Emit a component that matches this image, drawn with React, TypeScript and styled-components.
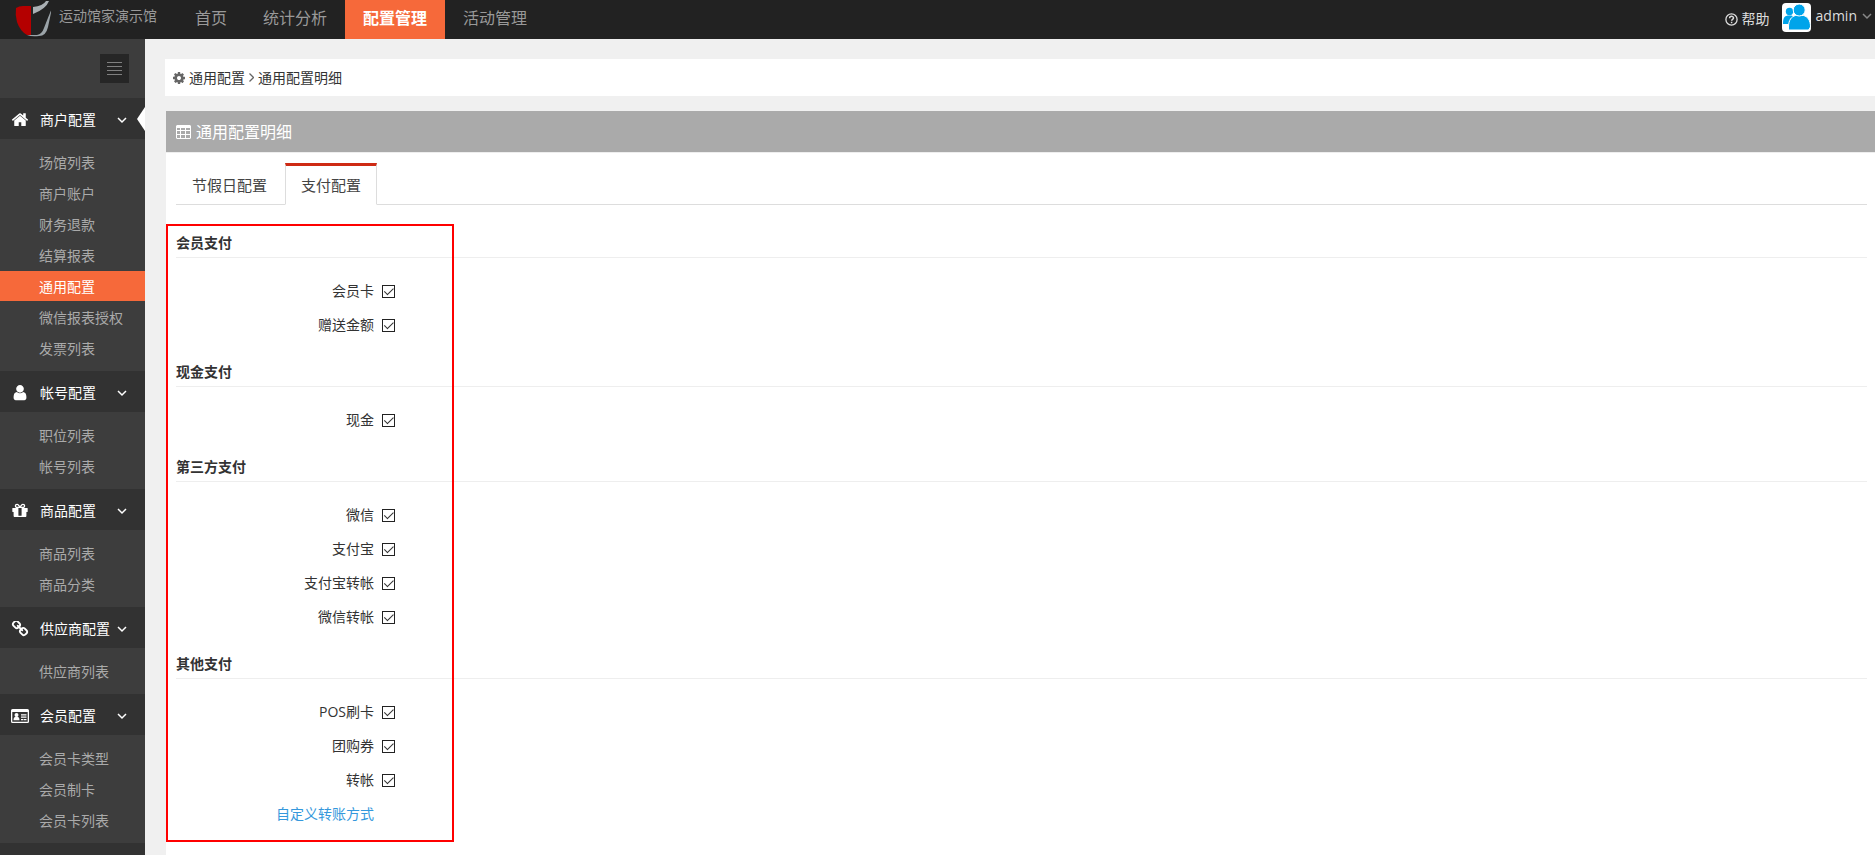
import React from "react";
import styled, { createGlobalStyle, css } from "styled-components";

const GlobalStyle = createGlobalStyle`
  *, *::before, *::after { box-sizing: border-box; }
  body {
    margin: 0;
    background: #f0f0f0;
    color: #333;
    font: 14px/20px "Open Sans", "Noto Sans CJK SC", sans-serif;
  }
  a { text-decoration: none; }
  ul { list-style: none; margin: 0; padding: 0; }
`;

const Shell = styled.div`
  display: flex;
  flex-direction: column;
  height: 100vh;
`;

/* ---------- top bar ---------- */

const TopBar = styled.header`
  display: flex;
  flex: none;
  height: 39px;
  background: #222;
`;

const Brand = styled.a`
  display: flex;
  width: 177px;
  padding-left: 15px;
  gap: 8px;
  color: #999;
  line-height: 32px;
  white-space: nowrap;
`;

const TopNav = styled.nav`
  display: flex;
`;

const TopLink = styled.a<{ $active?: boolean }>`
  padding: 0 18px;
  font-size: 16px;
  line-height: 36px;
  color: #999;
  ${(p) =>
    p.$active &&
    css`
      background: #f6693a;
      color: #fff;
      font-weight: 700;
    `}
`;

const UserArea = styled.div`
  display: flex;
  margin-left: auto;
  padding: 3px 3px 0 0;
`;

const HelpLink = styled.a`
  display: flex;
  align-items: center;
  gap: 4px;
  height: 32px;
  margin-right: 12px;
  color: #ddd;
`;

const UserButton = styled.button`
  display: flex;
  align-items: flex-start;
  height: 30px;
  padding: 0;
  border: 0;
  background: none;
  color: #ddd;
  font: inherit;
  line-height: 26px;
  cursor: pointer;

  span { margin: 0 5px; }
  svg:last-child { margin-top: 8px; }
`;

/* ---------- side bar ---------- */

const Columns = styled.div`
  display: flex;
  flex: 1;
  min-height: 0;
`;

const Sidebar = styled.aside`
  display: flex;
  flex-direction: column;
  flex: none;
  width: 145px;
  overflow-y: auto;
  scrollbar-width: none;
  background: #3d3d3d;
`;

const Toggle = styled.button`
  display: flex;
  flex: none;
  flex-direction: column;
  justify-content: center;
  align-self: flex-end;
  gap: 3px;
  width: 29px;
  height: 29px;
  margin: 15px 16px 15px 0;
  padding: 0 7px;
  border: 0;
  background: #262626;
  cursor: pointer;

  i { height: 1px; background: #808080; }
`;

const GroupHeader = styled.button`
  position: relative;
  display: flex;
  align-items: center;
  width: 100%;
  height: 41px;
  padding: 2px 18px 0 10px;
  border: 0;
  background: #323232;
  color: #fff;
  font: inherit;
  text-align: left;
  cursor: pointer;

  span { flex: 1; white-space: nowrap; }
`;

const GroupIcon = styled.svg`
  width: 20px;
  height: 16px;
  margin-right: 10px;
  fill: #fff;
`;

const Pointer = styled.svg`
  position: absolute;
  top: 9px;
  right: 0;
`;

const ItemList = styled.ul`
  padding: 8px 0 7px;
`;

const Item = styled.a<{ $active?: boolean }>`
  display: block;
  height: 30px;
  margin-bottom: 1px;
  padding-left: 39px;
  line-height: 32px;
  white-space: nowrap;
  color: ${(p) => (p.$active ? "#fff" : "#aaa")};
  background: ${(p) => (p.$active ? "#f6693a" : "transparent")};
`;

const SidebarTail = styled.div`
  flex: 1;
  background: #323232;
`;

/* ---------- main column ---------- */

const Main = styled.main`
  flex: 1;
  display: flex;
  flex-direction: column;
  min-width: 0;
  overflow-y: auto;
  padding: 20px 0 0 20px;
`;

const Crumbs = styled.nav`
  display: flex;
  flex: none;
  align-items: center;
  height: 37px;
  padding-left: 8px;
  background: #fff;
  gap: 4px;

  a { color: #333; }
`;

const Panel = styled.section`
  position: relative;
  flex: 1 0 auto;
  margin: 15px 0 0 1px;
  padding-bottom: 9px;
  background: #fff;
`;

const PanelTitle = styled.h1`
  display: flex;
  align-items: center;
  gap: 5px;
  height: 42px;
  margin: 0;
  padding: 0 10px;
  border-bottom: 1px solid #eee;
  background: #aaa;
  color: #fff;
  font-size: 16px;
  font-weight: 400;
`;

const Tabs = styled.div`
  display: flex;
  gap: 2px;
  margin: 10px 8px 23px 10px;
  border-bottom: 1px solid #ddd;
`;

const Tab = styled.button<{ $active?: boolean }>`
  height: 42px;
  margin-bottom: -1px;
  padding: 0 15px;
  border: 1px solid transparent;
  border-top: 3px solid transparent;
  background: none;
  color: #444;
  font: inherit;
  font-size: 15px;
  cursor: pointer;
  ${(p) =>
    p.$active &&
    css`
      border-color: #ce2a14 #ddd transparent;
      background: #fff;
    `}
`;

const Section = styled.fieldset`
  min-width: 0;
  margin: 0 8px 15px 10px;
  padding: 0;
  border: 0;
`;

const SectionTitle = styled.legend`
  display: block;
  width: 100%;
  height: 30px;
  margin-bottom: 16px;
  padding: 0;
  border-bottom: 1px solid #eee;
  font-weight: 700;
  line-height: 29px;
`;

const Row = styled.div`
  display: flex;
  align-items: center;
  gap: 8px;
  height: 34px;

  label, a { width: 198px; text-align: right; }
  a { color: #3598dc; }
`;

const Check = styled.input`
  appearance: none;
  width: 13px;
  height: 13px;
  margin: 0;
  border: 1px solid #222;
  background: #fff;

  &:checked::before {
    content: "";
    display: block;
    width: 9px;
    height: 5px;
    margin: 2px 1px;
    border: solid #333;
    border-width: 0 0 1px 1px;
    transform: rotate(-45deg);
    transform-origin: 50% 40%;
  }
`;

const Highlight = styled.div`
  position: absolute;
  top: 113px;
  bottom: 13px;
  left: 0;
  width: 288px;
  border: 2px solid #f00;
  pointer-events: none;
`;

/* ---------- drawings ---------- */

const icons: Record<string, React.ReactNode> = {
  home: (
    <path d="M1472 992v480q0 26-19 45t-45 19h-384v-384h-256v384h-384q-26 0-45-19t-19-45v-480q0-1 .5-3t.5-3l575-474 575 474q1 2 1 6zm223-69l-62 74q-8 9-21 11h-3q-13 0-21-7l-692-577-692 577q-12 8-24 7-13-2-21-11l-62-74q-8-10-7-23.5t11-21.5l719-599q32-26 76-26t76 26l244 204v-195q0-14 9-23t23-9h192q14 0 23 9t9 23v408l219 182q10 8 11 21.5t-7 23.5z" />
  ),
  user: (
    <path d="M1536 1399q0 109-62.5 187t-150.5 78h-854q-88 0-150.5-78t-62.5-187q0-85 8.5-160.5t31.5-152 58.5-131 94-89 134.5-34.5q131 128 313 128t313-128q76 0 134.5 34.5t94 89 58.5 131 31.5 152 8.5 160.5zm-256-887q0 159-112.5 271.5t-271.5 112.5-271.5-112.5-112.5-271.5 112.5-271.5 271.5-112.5 271.5 112.5 112.5 271.5z" />
  ),
  gift: (
    <path d="M1056 1356v-716h-320v716q0 25 18 38.5t46 13.5h192q28 0 46-13.5t18-38.5zm-456-844h195l-126-161q-26-31-69-31-40 0-68 28t-28 68 28 68 68 28zm688-96q0-40-28-68t-68-28q-43 0-69 31l-125 161h194q40 0 68-28t28-68zm376 256v320q0 14-9 23t-23 9h-96v416q0 40-28 68t-68 28h-1088q-40 0-68-28t-28-68v-416h-96q-14 0-23-9t-9-23v-320q0-14 9-23t23-9h440q-93 0-158.5-65.5t-65.5-158.5 65.5-158.5 158.5-65.5q107 0 168 77l128 165 128-165q61-77 168-77 93 0 158.5 65.5t65.5 158.5-65.5 158.5-158.5 65.5h440q14 0 23 9t9 23z" />
  ),
  chain: (
    <path d="M1520 1216q0-40-28-68l-208-208q-28-28-68-28-42 0-72 32 3 3 19 18.5t21.5 21.5 15 19 13 25.5 3.5 27.5q0 40-28 68t-68 28q-15 0-27.5-3.5t-25.5-13-19-15-21.5-21.5-18.5-19q-33 31-33 73 0 40 28 68l206 207q27 27 68 27 40 0 68-26l147-146q28-28 28-67zm-703-705q0-40-28-68l-206-207q-28-28-68-28-39 0-68 27l-147 146q-28 28-28 67 0 40 28 68l208 208q27 27 68 27 42 0 72-31-3-3-19-18.5t-21.5-21.5-15-19-13-25.5-3.5-27.5q0-40 28-68t68-28q15 0 27.5 3.5t25.5 13 19 15 21.5 21.5 18.5 19q33-31 33-73zm895 705q0 120-85 203l-147 146q-83 83-203 83-121 0-204-85l-206-207q-83-83-83-203 0-123 88-209l-88-88q-86 88-208 88-120 0-204-84l-208-208q-84-84-84-204t85-203l147-146q83-83 203-83 121 0 204 85l206 207q83 83 83 203 0 123-88 209l88 88q86-88 208-88 120 0 204 84l208 208q84 84 84 204z" />
  ),
};

const CardIcon = () => (
  <GroupIcon viewBox="0 0 20 16" aria-hidden="true">
    <path
      fillRule="evenodd"
      d="M2.500 1h15a1.500 1.500 0 0 1 1.500 1.500v11a1.500 1.500 0 0 1-1.500 1.500h-15a1.500 1.500 0 0 1-1.500-1.500v-11A1.500 1.500 0 0 1 2.500 1zM2.300 4v9.700h15.400V4z"
    />
    <circle cx="6.500" cy="7" r="2" />
    <path d="M3.500 12.200c0-2.400 1-3.600 3-3.600s3 1.200 3 3.600zM11 6.300h5.500v1.200H11zM11 8.600h5.500v1.200H11zM11 11h2.500v1.200H11zM14 11h2.500v1.200H14z" />
  </GroupIcon>
);

const Chevron = ({ color = "#fff" }: { color?: string }) => (
  <svg width="10" height="10" viewBox="0 0 10 10" fill="none" aria-hidden="true">
    <path d="M1 3l4 4 4-4" stroke={color} strokeWidth="1.500" />
  </svg>
);

const Logo = () => (
  <svg width="36" height="38" viewBox="0 0 36 38" aria-hidden="true">
    <path d="M1 8Q4 6 8 6h8v29h-4Q5 31 2 22Q0 15 1 8z" fill="#b40000" />
    <path d="M18 7Q28 6 31 1h3Q31 9 18 14z" fill="#aab0b4" />
    <path d="M37 8Q32 20 29 28Q27 34 22 35l-10 0Q17 37 24 36Q31 36 33 27z" fill="#9ba3a8" />
  </svg>
);

const Avatar = () => (
  <svg width="29" height="29" viewBox="0 0 29 29" aria-hidden="true">
    <rect width="29" height="29" rx="4" fill="#fff" />
    <g fill="#00a4ea">
      <circle cx="7.500" cy="8.500" r="3.700" />
      <path d="M1 21c0-6 1-8.500 6.500-8.500S13 15 13 21z" />
    </g>
    <g fill="#00a4ea" stroke="#fff">
      <path d="M6.500 27v-3c0-7 3-10.500 7-11.500h8c4 1 7 4.500 7 11.500l-2 3z" />
      <circle cx="17.200" cy="7" r="6" />
    </g>
  </svg>
);

const HelpIcon = () => (
  <svg width="13" height="13" viewBox="0 0 13 13" fill="none" stroke="#ddd" aria-hidden="true">
    <circle cx="6.500" cy="6.500" r="5.600" strokeWidth="1.300" />
    <path d="M4.600 5.200c0-2.500 3.900-2.400 3.900-.2 0 1.300-1.900 1.300-1.900 2.700M6.600 8.700v1.500" strokeWidth="1.500" />
  </svg>
);

const GearIcon = () => (
  <svg width="12" height="12" viewBox="128 128 1536 1536" fill="#666" aria-hidden="true">
    <path d="M1152 896q0-106-75-181t-181-75-181 75-75 181 75 181 181 75 181-75 75-181zm512-109v222q0 12-8 23t-20 13l-185 28q-19 54-39 91 35 50 107 138 10 12 10 25t-9 23q-27 37-99 108t-94 71q-12 0-26-9l-138-108q-44 23-91 38-16 136-29 186-7 28-36 28h-222q-14 0-24.5-8.5t-11.5-21.5l-28-184q-49-16-90-37l-141 107q-10 9-25 9-14 0-25-11-126-114-165-168-7-10-7-23 0-12 8-23 15-21 51-66.5t54-70.5q-27-50-41-99l-183-27q-13-2-21-12.5t-8-23.5v-222q0-12 8-23t19-13l186-28q14-46 39-92-40-57-107-138-10-12-10-24 0-10 9-23 26-36 98.5-107.5t94.5-71.5q13 0 26 10l138 107q44-23 91-38 16-136 29-186 7-28 36-28h222q14 0 24.5 8.5t11.5 21.5l28 184q49 16 90 37l142-107q9-9 24-9 13 0 25 10 129 119 165 170 7 8 7 22 0 12-8 23-15 21-51 66.5t-54 70.5q26 50 41 98l183 28q13 2 21 12.5t8 23.5z" />
  </svg>
);

const TableIcon = () => (
  <svg width="15" height="14" viewBox="0 0 15 14" aria-hidden="true">
    <path
      fill="#fff"
      fillRule="evenodd"
      d="M1 0h13l1 1v12l-1 1H1l-1-1V1zM1 3v2h3V3zM5 3v2h4V3zM10 3v2h4V3zM1 6v3h3V6zM5 6v3h4V6zM10 6v3h4V6zM1 10v3h3v-3zM5 10v3h4v-3zM10 10v3h4v-3z"
    />
  </svg>
);

/* ---------- data ---------- */

const topLinks = ["首页", "统计分析", "配置管理", "活动管理"];

const groups = [
  {
    icon: "home",
    title: "商户配置",
    items: ["场馆列表", "商户账户", "财务退款", "结算报表", "通用配置", "微信报表授权", "发票列表"],
  },
  { icon: "user", title: "帐号配置", items: ["职位列表", "帐号列表"] },
  { icon: "gift", title: "商品配置", items: ["商品列表", "商品分类"] },
  { icon: "chain", title: "供应商配置", items: ["供应商列表"] },
  { icon: "card", title: "会员配置", items: ["会员卡类型", "会员制卡", "会员卡列表"] },
];

const sections = [
  { title: "会员支付", options: ["会员卡", "赠送金额"] },
  { title: "现金支付", options: ["现金"] },
  { title: "第三方支付", options: ["微信", "支付宝", "支付宝转帐", "微信转帐"] },
  { title: "其他支付", options: ["POS刷卡", "团购券", "转帐"], link: "自定义转账方式" },
];

export default function App() {
  return (
    <Shell lang="zh-CN">
      <GlobalStyle />
      <TopBar>
        <Brand href="#">
          <Logo />
          运动馆家演示馆
        </Brand>
        <TopNav>
          {topLinks.map((t) => (
            <TopLink key={t} href="#" $active={t === "配置管理"}>
              {t}
            </TopLink>
          ))}
        </TopNav>
        <UserArea>
          <HelpLink href="#">
            <HelpIcon />
            帮助
          </HelpLink>
          <UserButton type="button">
            <Avatar />
            <span>admin</span>
            <Chevron color="#888" />
          </UserButton>
        </UserArea>
      </TopBar>
      <Columns>
        <Sidebar>
          <Toggle type="button" aria-label="菜单">
            <i />
            <i />
            <i />
            <i />
          </Toggle>
          {groups.map((g) => (
            <div key={g.title}>
              <GroupHeader type="button">
                {g.icon === "card" ? (
                  <CardIcon />
                ) : (
                  <GroupIcon viewBox="64 128 1664 1600" aria-hidden="true">
                    {icons[g.icon]}
                  </GroupIcon>
                )}
                <span>{g.title}</span>
                <Chevron />
                {g.icon === "home" && (
                  <Pointer width="8" height="24" viewBox="0 0 8 24" aria-hidden="true">
                    <path d="M8 0v24L0 12z" fill="#fff" />
                  </Pointer>
                )}
              </GroupHeader>
              <ItemList>
                {g.items.map((t) => (
                  <li key={t}>
                    <Item href="#" $active={t === "通用配置"}>
                      {t}
                    </Item>
                  </li>
                ))}
              </ItemList>
            </div>
          ))}
          <SidebarTail />
        </Sidebar>
        <Main>
          <Crumbs>
            <GearIcon />
            <a href="#">通用配置</a>
            <svg width="5" height="9" viewBox="0 0 5 9" fill="none" aria-hidden="true">
              <path d="M.5 .5l4 4-4 4" stroke="#666" strokeWidth="1.300" />
            </svg>
            <a href="#">通用配置明细</a>
          </Crumbs>
          <Panel>
            <PanelTitle>
              <TableIcon />
              通用配置明细
            </PanelTitle>
            <Tabs role="tablist">
              <Tab type="button" role="tab" aria-selected={false}>
                节假日配置
              </Tab>
              <Tab type="button" role="tab" aria-selected $active>
                支付配置
              </Tab>
            </Tabs>
            {sections.map((s) => (
              <Section key={s.title}>
                <SectionTitle>{s.title}</SectionTitle>
                {s.options.map((o) => (
                  <Row key={o}>
                    <label htmlFor={o}>{o}</label>
                    <Check type="checkbox" id={o} defaultChecked />
                  </Row>
                ))}
                {s.link && (
                  <Row>
                    <a href="#">{s.link}</a>
                  </Row>
                )}
              </Section>
            ))}
            <Highlight />
          </Panel>
        </Main>
      </Columns>
    </Shell>
  );
}
